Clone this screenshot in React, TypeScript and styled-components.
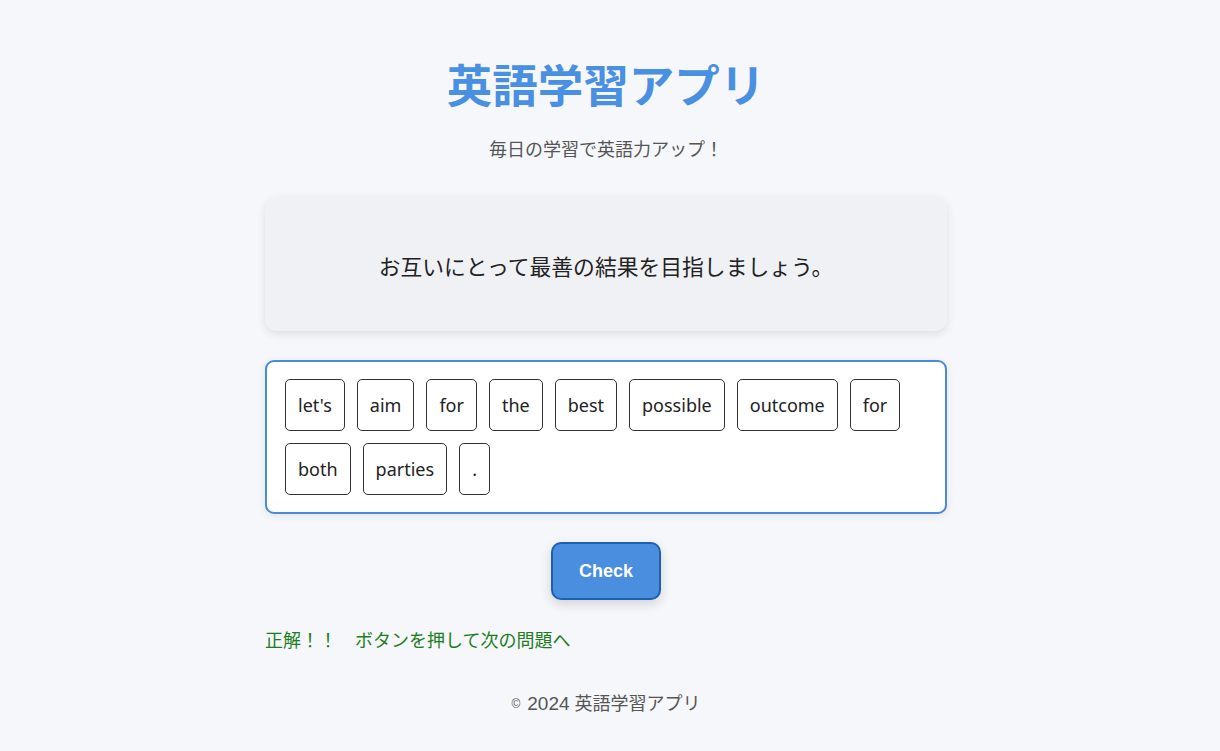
import styled, { createGlobalStyle } from "styled-components";

const GlobalStyle = createGlobalStyle`
    body {
        margin: 0;
        padding-right: 8px;
        background: #f5f7fa;
        font-family: "Noto Sans CJK JP", "Noto Sans", sans-serif;
        color: #222;
    }
`;

const Page = styled.div`
    width: 682px;
    margin: 0 auto;
    padding-top: 56px;
    padding-bottom: 30px;
`;

const Title = styled.h1`
    margin: 0;
    text-align: center;
    font-size: 45.5px;
    line-height: 54px;
    font-weight: 700;
    color: #4a90e2;
`;

const Subtitle = styled.p`
    margin: 25px 0 0 0;
    text-align: center;
    font-size: 18px;
    line-height: 27px;
    color: #555;
`;

const SentenceCard = styled.div`
    margin-top: 35px;
    height: 134px;
    padding-top: 3px;
    box-sizing: border-box;
    display: flex;
    align-items: center;
    justify-content: center;
    background: #f0f1f5;
    border-radius: 12px;
    box-shadow: 0 3px 10px rgba(0, 0, 0, 0.1);
    font-size: 21.8px;
    color: #222;
`;

const WordBox = styled.div`
    margin-top: 29px;
    box-sizing: border-box;
    min-height: 153px;
    padding: 17px 18px;
    background: white;
    border: 2px solid #4a8ad8;
    border-radius: 9px;
    box-shadow: 0 2px 8px rgba(0, 0, 0, 0.08);
    display: flex;
    flex-wrap: wrap;
    align-content: flex-start;
    gap: 12px;
`;

const Word = styled.span`
    box-sizing: border-box;
    height: 52px;
    padding: 0 12px;
    display: inline-flex;
    align-items: center;
    border: 1px solid #333;
    border-radius: 5px;
    background: white;
    font-family: "Noto Sans", sans-serif;
    font-size: 18px;
    color: #222;
`;

const ButtonRow = styled.div`
    margin-top: 28px;
    display: flex;
    justify-content: center;
`;

const CheckButton = styled.button`
    width: 110px;
    height: 58px;
    background: #4a8ee0;
    border: 2px solid #1f5fb0;
    border-radius: 10px;
    box-shadow: 0 4px 12px rgba(0, 0, 0, 0.15);
    color: white;
    font-family: "Liberation Sans", Arial, sans-serif;
    font-weight: 700;
    font-size: 18px;
`;

const Result = styled.p`
    margin: 26px 0 0 0;
    font-size: 18px;
    line-height: 27px;
    color: #1e7d1e;
`;

const Footer = styled.footer`
    margin-top: 37px;
    text-align: center;
    font-family: "Liberation Sans", "Noto Sans CJK JP", sans-serif;
    font-size: 18px;
    line-height: 27px;
    color: #555;
`;

const Copy = styled.span`
    font-size: 12px;
    margin-right: 7px;
    vertical-align: 2px;
`;

const Year = styled.span`
    font-size: 19px;
`;

const words = ["let's", "aim", "for", "the", "best", "possible", "outcome", "for", "both", "parties", "."];

export default function App() {
    return (
        <>
            <GlobalStyle />
            <Page>
                <Title>英語学習アプリ</Title>
                <Subtitle>毎日の学習で英語力アップ！</Subtitle>
                <SentenceCard>お互いにとって最善の結果を目指しましょう。</SentenceCard>
                <WordBox>
                    {words.map((w, i) => (
                        <Word key={i}>{w}</Word>
                    ))}
                </WordBox>
                <ButtonRow>
                    <CheckButton>Check</CheckButton>
                </ButtonRow>
                <Result>正解！！　ボタンを押して次の問題へ</Result>
                <Footer>
                    <Copy>©</Copy>
                    <Year>2024</Year> 英語学習アプリ
                </Footer>
            </Page>
        </>
    );
}
